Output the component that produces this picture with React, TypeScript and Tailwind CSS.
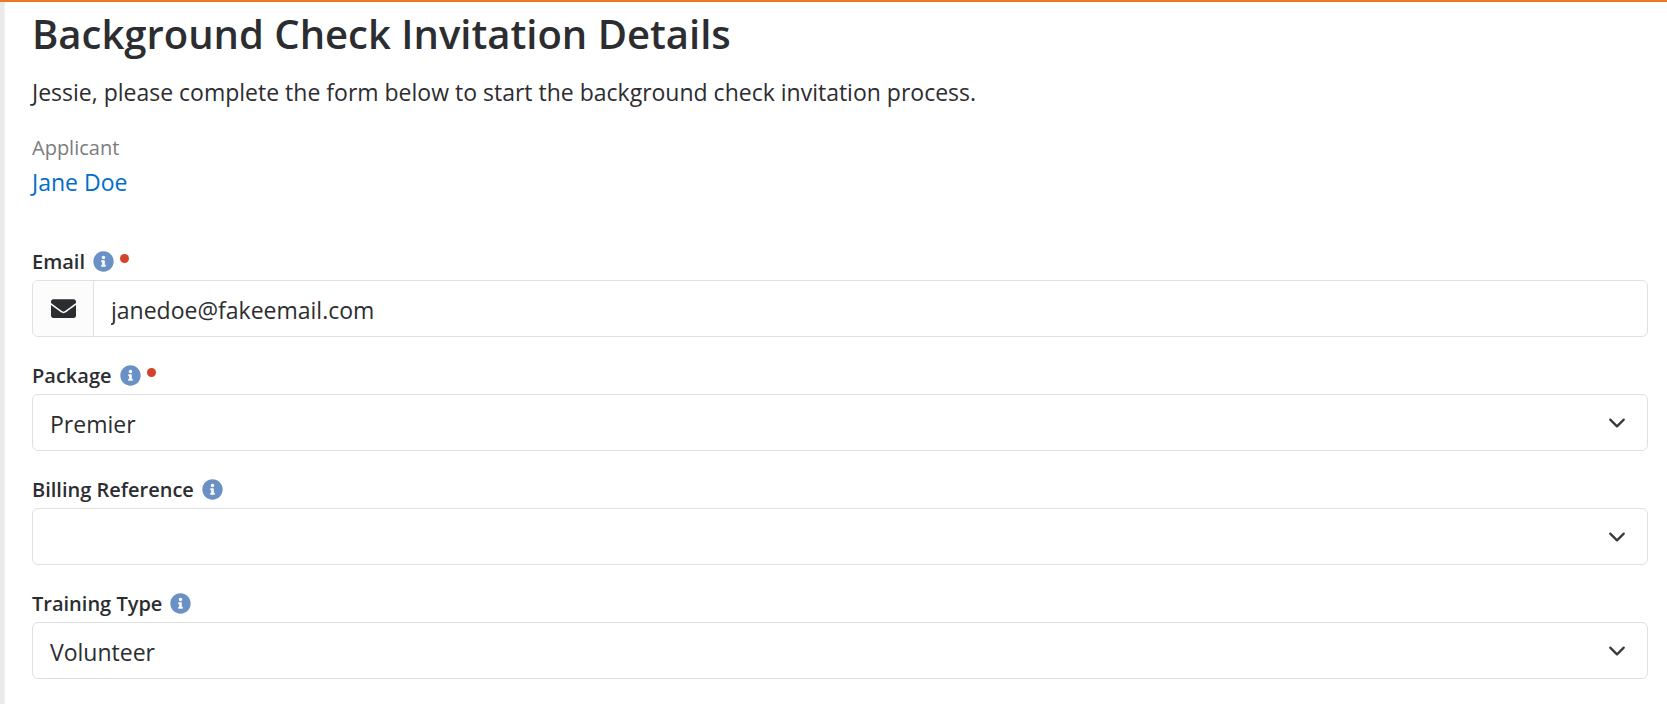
import { useState } from "react";
import type { ReactNode } from "react";
import { FaEnvelope, FaInfoCircle } from "react-icons/fa";

type FieldProps = {
  id: string;
  label: string;
  required?: boolean;
  children: ReactNode;
};

function Field({ id, label, required, children }: FieldProps) {
  return (
    <div>
      <div className="flex items-center h-[26px] mb-[6px]">
        <label htmlFor={id} className="pt-0.5 text-[20px] leading-6 font-semibold">
          {label}
        </label>
        <button type="button" aria-label={`${label} help`} className="ml-2 text-[#6991c5]">
          <FaInfoCircle size={21} />
        </button>
        {required && (
          <span className="w-[9px] h-[9px] ml-1.5 mb-1.5 rounded-full bg-[#d6412b]" />
        )}
      </div>
      {children}
    </div>
  );
}

type SelectProps = {
  id: string;
  value: string;
  options: string[];
  onChange: (value: string) => void;
};

function Select({ id, value, options, onChange }: SelectProps) {
  return (
    <div className="grid items-center">
      <select
        id={id}
        value={value}
        onChange={(e) => onChange(e.target.value)}
        className="col-start-1 row-start-1 w-full h-[57px] pt-1 pl-[17px] pr-14 appearance-none rounded-md border border-[#dfe0e1] bg-white text-[23px]"
      >
        {options.map((option) => (
          <option key={option} value={option}>
            {option}
          </option>
        ))}
      </select>
      <svg
        viewBox="0 0 16 16"
        className="col-start-1 row-start-1 justify-self-end w-[18px] h-[18px] mr-[22px] pointer-events-none"
        fill="none"
        stroke="#343a40"
        strokeWidth="2"
        strokeLinecap="round"
        strokeLinejoin="round"
      >
        <path d="m2 5 6 6 6-6" />
      </svg>
    </div>
  );
}

export default function App() {
  const [email, setEmail] = useState("janedoe@fakeemail.com");
  const [pkg, setPkg] = useState("Premier");
  const [billing, setBilling] = useState("");
  const [training, setTraining] = useState("Volunteer");

  return (
    <div className="min-h-screen flex border-t-2 border-[#ee7725] bg-white font-['Segoe_UI','Open_Sans',sans-serif] text-[#2c2d31]">
      {/* page edge */}
      <div className="w-[5px] shrink-0 bg-[#e9e9e9] border-r border-[#f1f1f1]" />

      <main className="flex-1 min-w-0 pl-[27px] pr-[19px] pb-6">
        <h1 className="pt-1 text-[40px] leading-[56px] font-semibold">
          Background Check Invitation Details
        </h1>
        <p className="mt-3 text-[23px] leading-9">
          Jessie, please complete the form below to start the background check invitation process.
        </p>

        {/* APPLICANT */}
        <div className="mt-[22px]">
          <div className="text-[20px] leading-8 text-[#7c7c7d]">Applicant</div>
          <a href="#applicant" className="block text-[23px] leading-9 text-[#006dcc]">
            Jane Doe
          </a>
        </div>

        {/* FORM */}
        <form className="mt-12 flex flex-col gap-[25px]" onSubmit={(e) => e.preventDefault()}>
          <Field id="email" label="Email" required>
            <div className="flex h-[57px] rounded-md border border-[#dfe0e1] overflow-hidden">
              <span className="w-[61px] shrink-0 flex items-center justify-center bg-[#fcfcfc] border-r border-[#dfe0e1]">
                <FaEnvelope size={25} />
              </span>
              <input
                id="email"
                type="email"
                value={email}
                onChange={(e) => setEmail(e.target.value)}
                className="flex-1 min-w-0 pt-1 px-[17px] text-[23px] outline-none"
              />
            </div>
          </Field>

          <Field id="package" label="Package" required>
            <Select id="package" value={pkg} options={["Premier"]} onChange={setPkg} />
          </Field>

          <Field id="billing" label="Billing Reference">
            <Select id="billing" value={billing} options={[""]} onChange={setBilling} />
          </Field>

          <Field id="training" label="Training Type">
            <Select
              id="training"
              value={training}
              options={["Volunteer"]}
              onChange={setTraining}
            />
          </Field>
        </form>
      </main>
    </div>
  );
}
